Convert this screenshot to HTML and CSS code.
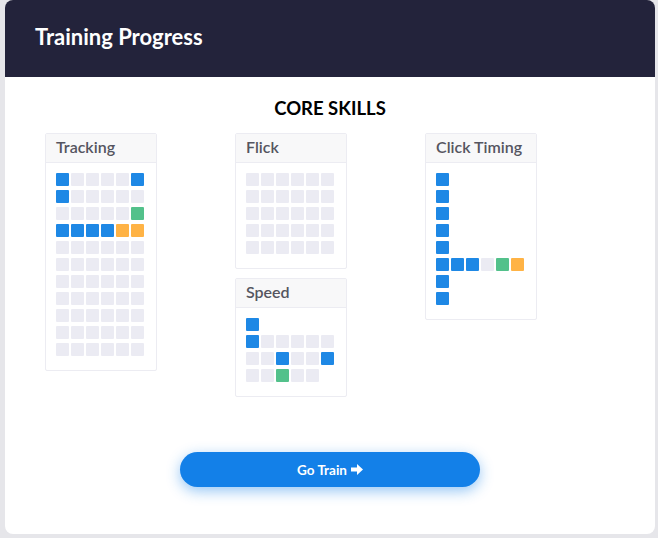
FILE: index.html
```html
<!DOCTYPE html>
<html lang="en">
<head>
    <meta charset="UTF-8">
    <meta name="viewport" content="width=device-width, initial-scale=1.0">
    <title>Training Progress</title>
    <link rel="stylesheet" href="styles.css">
</head>
<body>
    <div class="panel">
        <div class="panel-head">
            <h1>Training Progress</h1>
        </div>
        <div class="panel-body">
            <h2>CORE SKILLS</h2>
            <div class="skills">
                <div class="col">
                    <div class="skill">
                        <div class="skill-title">Tracking</div>
                        <div class="skill-grid">
                            <div class="row"><span class="c b"></span><span class="c"></span><span class="c"></span><span class="c"></span><span class="c"></span><span class="c b"></span></div>
                            <div class="row"><span class="c b"></span><span class="c"></span><span class="c"></span><span class="c"></span><span class="c"></span><span class="c"></span></div>
                            <div class="row"><span class="c"></span><span class="c"></span><span class="c"></span><span class="c"></span><span class="c"></span><span class="c g"></span></div>
                            <div class="row"><span class="c b"></span><span class="c b"></span><span class="c b"></span><span class="c b"></span><span class="c o"></span><span class="c o"></span></div>
                            <div class="row"><span class="c"></span><span class="c"></span><span class="c"></span><span class="c"></span><span class="c"></span><span class="c"></span></div>
                            <div class="row"><span class="c"></span><span class="c"></span><span class="c"></span><span class="c"></span><span class="c"></span><span class="c"></span></div>
                            <div class="row"><span class="c"></span><span class="c"></span><span class="c"></span><span class="c"></span><span class="c"></span><span class="c"></span></div>
                            <div class="row"><span class="c"></span><span class="c"></span><span class="c"></span><span class="c"></span><span class="c"></span><span class="c"></span></div>
                            <div class="row"><span class="c"></span><span class="c"></span><span class="c"></span><span class="c"></span><span class="c"></span><span class="c"></span></div>
                            <div class="row"><span class="c"></span><span class="c"></span><span class="c"></span><span class="c"></span><span class="c"></span><span class="c"></span></div>
                            <div class="row"><span class="c"></span><span class="c"></span><span class="c"></span><span class="c"></span><span class="c"></span><span class="c"></span></div>
                        </div>
                    </div>
                </div>
                <div class="col">
                    <div class="skill">
                        <div class="skill-title">Flick</div>
                        <div class="skill-grid">
                            <div class="row"><span class="c"></span><span class="c"></span><span class="c"></span><span class="c"></span><span class="c"></span><span class="c"></span></div>
                            <div class="row"><span class="c"></span><span class="c"></span><span class="c"></span><span class="c"></span><span class="c"></span><span class="c"></span></div>
                            <div class="row"><span class="c"></span><span class="c"></span><span class="c"></span><span class="c"></span><span class="c"></span><span class="c"></span></div>
                            <div class="row"><span class="c"></span><span class="c"></span><span class="c"></span><span class="c"></span><span class="c"></span><span class="c"></span></div>
                            <div class="row"><span class="c"></span><span class="c"></span><span class="c"></span><span class="c"></span><span class="c"></span><span class="c"></span></div>
                        </div>
                    </div>
                    <div class="skill">
                        <div class="skill-title">Speed</div>
                        <div class="skill-grid">
                            <div class="row"><span class="c b"></span></div>
                            <div class="row"><span class="c b"></span><span class="c"></span><span class="c"></span><span class="c"></span><span class="c"></span><span class="c"></span></div>
                            <div class="row"><span class="c"></span><span class="c"></span><span class="c b"></span><span class="c"></span><span class="c"></span><span class="c b"></span></div>
                            <div class="row"><span class="c"></span><span class="c"></span><span class="c g"></span><span class="c"></span><span class="c"></span></div>
                        </div>
                    </div>
                </div>
                <div class="col">
                    <div class="skill">
                        <div class="skill-title">Click Timing</div>
                        <div class="skill-grid">
                            <div class="row"><span class="c b"></span></div>
                            <div class="row"><span class="c b"></span></div>
                            <div class="row"><span class="c b"></span></div>
                            <div class="row"><span class="c b"></span></div>
                            <div class="row"><span class="c b"></span></div>
                            <div class="row"><span class="c b"></span><span class="c b"></span><span class="c b"></span><span class="c"></span><span class="c g"></span><span class="c o"></span></div>
                            <div class="row"><span class="c b"></span></div>
                            <div class="row"><span class="c b"></span></div>
                        </div>
                    </div>
                </div>
            </div>
            <div class="actions">
                <button type="button" class="train-btn">Go Train
                    <svg width="12" height="11" viewBox="0 0 12 11"><path d="M0 3.5h6V0l6 5.5-6 5.5V7.5H0z" fill="#fff"/></svg>
                </button>
            </div>
        </div>
    </div>
</body>
</html>
```

FILE: styles.css
```css
*{
    margin: 0px;
    padding: 0px;
    box-sizing: border-box;
}

body{
    background: #e6e6ea;
    padding: 0px 3px 4px 5px;
    font-family: "Source Sans Pro", Lato, "Noto Sans", sans-serif;
}

.panel{
    width: 650px;
    height: 534px;
    background: #ffffff;
    border-radius: 8px;
    overflow: hidden;
}

.panel-head{
    height: 77px;
    background: #23233b;
    display: flex;
    align-items: center;
    padding: 0px 30px 4px 30px;
}
.panel-head h1{
    color: #ffffff;
    font-size: 22px;
    font-weight: 700;
}

.panel-body{
    padding: 20px 40px 0px 40px;
}
.panel-body h2{
    text-align: center;
    font-size: 18.5px;
    font-weight: 700;
    color: #000000;
    line-height: 22px;
}

.skills{
    display: grid;
    grid-template-columns: 190px 190px 190px;
    margin-top: 14px;
}
.col{
    display: flex;
    flex-direction: column;
    gap: 9px;
}

.skill{
    width: 112px;
    border: 1px solid #ececf2;
    border-radius: 2px;
    background: #ffffff;
}
.skill-title{
    height: 29px;
    background: #f8f8f9;
    border-bottom: 1px solid #ececf2;
    padding: 0px 10px;
    font-size: 16px;
    font-weight: 600;
    color: #555560;
    line-height: 26px;
}
.skill-grid{
    padding: 10px 10px 10px 10px;
}
.row{
    display: flex;
    gap: 2px;
    margin-bottom: 4px;
}
.c{
    width: 13px;
    height: 13px;
    border-radius: 1px;
    background: #ebebf3;
}
.c.b{ background: #1e88e5; }
.c.g{ background: #53c18b; }
.c.o{ background: #ffb345; }

.actions{
    display: flex;
    justify-content: center;
    margin-top: 55px;
}
.train-btn{
    width: 300px;
    height: 35px;
    border: none;
    border-radius: 18px;
    background: #1380e8;
    color: #ffffff;
    font-family: inherit;
    font-size: 13.5px;
    font-weight: 700;
    display: flex;
    align-items: center;
    justify-content: center;
    gap: 4px;
    box-shadow: 0px 4px 14px rgba(19, 128, 232, 0.45);
}
```
